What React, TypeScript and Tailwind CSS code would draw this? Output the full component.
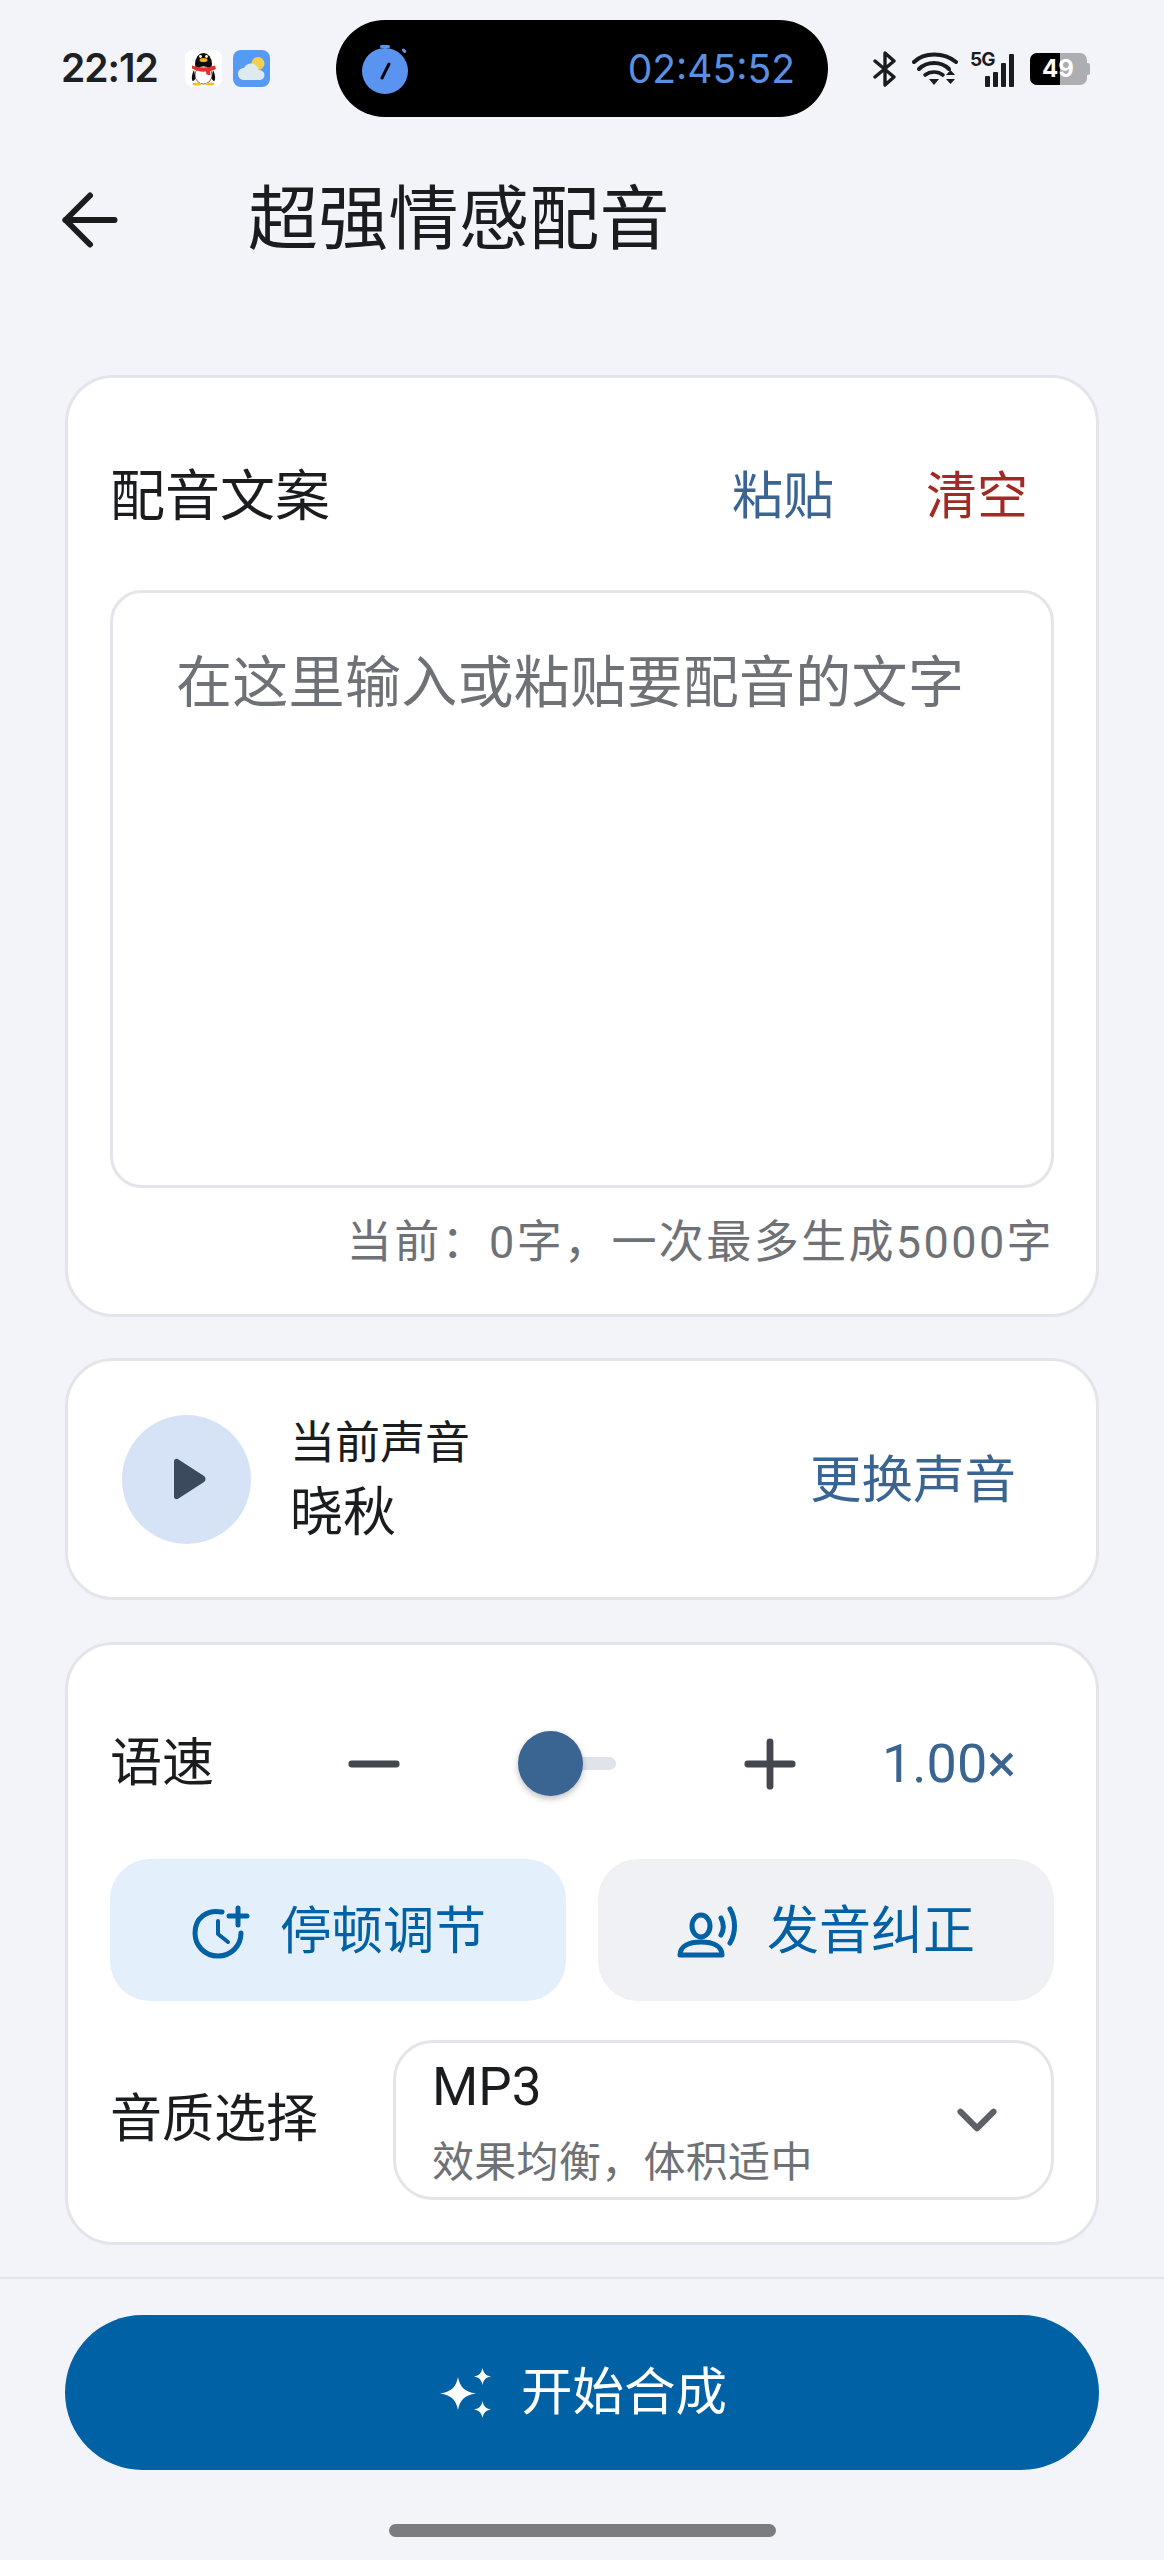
import { ArrowLeft, ChevronDown, Minus, Plus } from 'lucide-react'

const CJK = "font-['Roboto','Noto_Sans_CJK_SC',sans-serif]"

function StatusIcons() {
  return (
    <div className="flex items-center">
      {/* bluetooth */}
      <svg width="24" height="36" viewBox="0 0 24 36" fill="none" stroke="#1a1c1e" strokeWidth="3.4" strokeLinecap="round" strokeLinejoin="round">
        <path d="M2 10 21 26 12 34V2l9 8L2 26" />
      </svg>
      {/* wifi */}
      <svg className="ml-[15px]" width="46" height="36" viewBox="0 0 46 36" fill="none">
        <path d="M2 11C12 1 32 1 44 11" stroke="#1a1c1e" strokeWidth="4" strokeLinecap="round" />
        <path d="M7 18C15 10 29 10 37 18" stroke="#1a1c1e" strokeWidth="4" strokeLinecap="round" />
        <path d="M13 24C18 20 26 20 31 24" stroke="#1a1c1e" strokeWidth="3.6" strokeLinecap="round" />
        <path d="M17 28h10l-5 6zM34 24h9l-4.500-5zM34 28h9l-4.500 5z" fill="#1a1c1e" />
      </svg>
      {/* 5G + signal */}
      <div className="relative ml-[12px] h-[36px] w-[44px]">
        <span className="absolute left-0 top-[-1px] font-['Inter',sans-serif] text-[19px] font-bold leading-[19px] tracking-[-1px] text-[#1a1c1e]">5G</span>
        <div className="absolute bottom-0 right-0 flex items-end gap-[3px]">
          <div className="h-[11px] w-[5px] rounded-[1px] bg-[#1a1c1e]" />
          <div className="h-[15px] w-[5px] rounded-[1px] bg-[#1a1c1e]" />
          <div className="h-[24px] w-[5px] rounded-[1px] bg-[#1a1c1e]" />
          <div className="h-[33px] w-[5px] rounded-[1px] bg-[#1a1c1e]" />
        </div>
      </div>
      {/* battery */}
      <div className="relative ml-[16px] flex h-[32px] w-[57px] items-center overflow-hidden rounded-[7px] bg-[#adaeb1]">
        <div className="h-full w-[30px] bg-black" />
        <span className="absolute left-[12px] font-['Inter',sans-serif] text-[24px] font-bold leading-[32px] text-white">49</span>
      </div>
      <div className="h-[12px] w-[3px] rounded-r-[2px] bg-[#adaeb1]" />
    </div>
  )
}

function QQIcon() {
  return (
    <svg width="37" height="37" viewBox="0 0 37 37">
      <rect width="37" height="37" rx="8" fill="#fff" />
      <ellipse cx="18.500" cy="14" rx="8.500" ry="11" fill="#0d0d0d" />
      <path d="M9 20c-2 4-3 8-1.500 11 2 0 2.500-2 3-3zM28 20c2 4 3 8 1.500 11-2 0-2.500-2-3-3z" fill="#0d0d0d" />
      <ellipse cx="18.500" cy="25" rx="8.500" ry="9" fill="#fff" stroke="#0d0d0d" strokeWidth=".6" />
      <path d="M7 15.500c7 2.500 16 2.500 23 0l1 3.500c-2 1-4 1.500-6 2l.5 4.500-4-1-.5-3c-5 .5-10-.5-14-3z" fill="#e2302a" />
      <ellipse cx="18.500" cy="10" rx="4" ry="2" fill="#f5b21a" />
      <circle cx="15.500" cy="6.500" r="1.400" fill="#fff" />
      <circle cx="21.500" cy="6.500" r="1.400" fill="#fff" />
      <ellipse cx="12" cy="34" rx="4.500" ry="1.500" fill="#f5c022" />
      <ellipse cx="25" cy="34" rx="4.500" ry="1.500" fill="#f5c022" />
    </svg>
  )
}

function WeatherIcon() {
  return (
    <svg width="37" height="37" viewBox="0 0 37 37">
      <rect width="37" height="37" rx="8" fill="#559bf5" />
      <circle cx="25" cy="13.500" r="6.500" fill="#f7cf4f" />
      <path d="M11 30c-3.500 0-6-2.500-6-6s2.500-6 6-6c1.500-3 4-4.500 7-4.500 4 0 7 3 7.500 6.500 3 0 6 2 6 5s-2.500 5-5.500 5z" fill="#dfe9f0" />
    </svg>
  )
}

function Stopwatch() {
  return (
    <svg width="50" height="50" viewBox="0 0 50 50">
      <rect x="20" y="1" width="10" height="3" rx="1.500" fill="#5b93f0" />
      <circle cx="25" cy="27" r="23" fill="#5b93f0" />
      <rect x="42" y="5" width="5" height="3" rx="1.500" transform="rotate(45 44 6)" fill="#5b93f0" />
      <path d="M22 34 29 20" stroke="#000" strokeWidth="3" strokeLinecap="round" />
    </svg>
  )
}

export default function App() {
  return (
    <div className={`flex h-[2560px] w-[1164px] flex-col overflow-hidden bg-[#f2f4f9] text-[#1a1c1e] ${CJK}`}>
      {/* STATUS BAR */}
      <div className="flex shrink-0 items-center pt-[20px]">
        <div className="flex h-[97px] w-[336px] items-center pl-[61px]">
          <span className="w-[124px] font-['Inter',sans-serif] text-[39px] font-semibold tracking-[-1px] text-[#1f2023]">22:12</span>
          <QQIcon />
          <div className="ml-[11px]"><WeatherIcon /></div>
        </div>
        <div className="flex h-[97px] w-[492px] items-center justify-between rounded-full bg-black pl-[24px] pr-[33px]">
          <Stopwatch />
          <span className="font-['Inter',sans-serif] text-[39px] leading-none text-[#5b8fe0]">02:45:52</span>
        </div>
        <div className="ml-[45px]"><StatusIcons /></div>
      </div>

      {/* HEADER */}
      <div className="flex h-[206px] shrink-0 items-center pl-[48px]">
        <ArrowLeft size={84} strokeWidth={1.700} className="text-[#1a1c1e]" />
        <h1 className="ml-[116px] text-[70px] tracking-[0.3px] font-normal leading-none">超强情感配音</h1>
      </div>

      <div className="mx-[65px] mt-[52px] flex flex-col">
        {/* COPY CARD */}
        <div className="h-[942px] rounded-[48px] border-[3px] border-[#e3e5ea] bg-white px-[42px]">
          <div className="flex h-[212px] items-center pt-[24px]">
            <span className="text-[55px] leading-none">配音文案</span>
            <span className="ml-auto text-[51px] leading-none text-[#3a6491]">粘贴</span>
            <span className="ml-[92px] mr-[26px] text-[51px] leading-none text-[#a32a22]">清空</span>
          </div>
          <div className="h-[598px] rounded-[32px] border-[3px] border-[#e3e5ea] px-[63px] pt-[55px]">
            <p className="text-[56px] leading-[70px] tracking-[0.3px] text-[#6e7176]">在这里输入或粘贴要配音的文字</p>
          </div>
          <p className="mt-[28px] text-right text-[45px] leading-[54px] tracking-[2.4px] text-[#6e7176]">当前：0字，一次最多生成5000字</p>
        </div>

        {/* VOICE CARD */}
        <div className="mt-[41px] flex h-[242px] items-center rounded-[48px] border-[3px] border-[#e3e5ea] bg-white pl-[54px] pr-[80px]">
          <div className="flex size-[129px] shrink-0 items-center justify-center rounded-full bg-[#d6e3f7]">
            <svg width="36" height="42" viewBox="0 0 36 42" className="ml-[4px]">
              <path d="M3 3.500C3 1 5.500 0 7.500 1.500L33 18c2 1.500 2 4.500 0 6L7.500 40.500C5.500 42 3 41 3 38.500z" fill="#3c4a5e" />
            </svg>
          </div>
          <div className="ml-[39px] flex flex-col pt-[3px]">
            <span className="text-[45px] leading-[56px]">当前声音</span>
            <span className="mt-[9px] text-[53px] leading-[64px]">晓秋</span>
          </div>
          <span className="ml-auto pt-[3px] text-[51.500px] leading-none text-[#3a6491]">更换声音</span>
        </div>

        {/* SETTINGS CARD */}
        <div className="mt-[42px] h-[603px] rounded-[48px] border-[3px] border-[#e3e5ea] bg-white px-[42px]">
          <div className="flex h-[215px] items-center pt-[22px]">
            <span className="w-[216px] text-[52px] leading-none">语速</span>
            <Minus size={76} strokeWidth={2.150} className="ml-[10px] text-[#44474e]" />
            <div className="relative ml-[146px] h-[13px] w-[58px] rounded-r-full bg-[#e1e3ea]">
              <div className="absolute left-[-40px] top-[-26px] size-[65px] rounded-full bg-[#3a6491] shadow-[0_3px_6px_rgba(0,0,0,0.25)]" />
            </div>
            <Plus size={76} strokeWidth={2.150} className="ml-[116px] text-[#44474e]" />
            <span className="ml-[74px] font-['Roboto',sans-serif] text-[54px] leading-none text-[#3a6491]">1.00×</span>
          </div>
          <div className="-mt-[1px] grid grid-cols-2 gap-[32px]">
            <div className="flex h-[142px] items-center justify-center gap-[30px] rounded-[40px] bg-[#e3f0fb] pt-[3px] pl-[2px] text-[#0061a4]">
              <svg width="58" height="56" viewBox="0 0 58 56" fill="none" stroke="#0061a4" strokeWidth="5" strokeLinecap="round" strokeLinejoin="round">
                <path d="M30 8C15 5 3 14 3 29c0 13 10 23 23 23s23-10 23-23" />
                <path d="M26 17v13l10 8" strokeWidth="4" />
                <path d="M46 4v17M37 12h18" />
              </svg>
              <span className="text-[51.500px] leading-none">停顿调节</span>
            </div>
            <div className="flex h-[142px] items-center justify-center gap-[30px] rounded-[40px] bg-[#eff1f5] pt-[3px] text-[#0061a4]">
              <svg width="60" height="52" viewBox="0 0 60 52" fill="none" stroke="#0061a4" strokeWidth="5" strokeLinecap="round">
                <ellipse cx="24" cy="20" rx="9" ry="11" />
                <path d="M3 49c0-9 9-13 21-13s21 4 21 13z" strokeLinejoin="round" />
                <path d="M44 12c3 6 3 12 0 17" />
                <path d="M53 3c6 10 6 24 0 34" />
              </svg>
              <span className="text-[52px] leading-none">发音纠正</span>
            </div>
          </div>
          <div className="mt-[39px] flex items-center">
            <span className="w-[283px] text-[52px] leading-none">音质选择</span>
            <div className="flex h-[160px] flex-1 items-center rounded-[40px] border-[3px] border-[#e3e5ea] pl-[36px] pr-[56px]">
              <div className="flex flex-col pt-[5px]">
                <span className="font-['Roboto',sans-serif] text-[53px] leading-[62px]">MP3</span>
                <span className="mt-[18px] text-[42px] leading-[54px] tracking-[0.3px] text-[#6e7176]">效果均衡，体积适中</span>
              </div>
              <ChevronDown size={66} strokeWidth={2.200} className="ml-auto -mr-[15px] text-[#5d6068]" />
            </div>
          </div>
        </div>
      </div>

      {/* BOTTOM ACTION */}
      <div className="mt-[32px] flex flex-1 flex-col border-t-[2px] border-[#e3e5ea] px-[65px] pt-[36px]">
        <button className="flex h-[155px] items-center justify-center gap-[30px] rounded-full bg-[#0061a4] pl-[3px] pt-[1px] text-white">
          <svg width="51" height="50" viewBox="0 0 51 50" fill="#fff">
            <path d="M18 9c2 10 6 14.500 18 16.500C24 27.500 20 32 18 42c-2-10-6-14.500-18-16.500C12 23.500 16 19 18 9z" />
            <path d="M42.500 0c1 5 3 7.500 8.500 8.500-5.500 1-7.500 3.500-8.500 8.500-1-5-3-7.500-8.500-8.500 5.500-1 7.500-3.500 8.500-8.500z" />
            <path d="M42.500 33c1 5 3 7.500 8.500 8.500-5.500 1-7.500 3.500-8.500 8.500-1-5-3-7.500-8.500-8.500 5.500-1 7.500-3.500 8.500-8.500z" />
          </svg>
          <span className="text-[51.500px] leading-none">开始合成</span>
        </button>
        <div className="mx-auto mt-[54px] h-[13px] w-[387px] rounded-full bg-[#7b7c80]" />
      </div>
    </div>
  )
}
